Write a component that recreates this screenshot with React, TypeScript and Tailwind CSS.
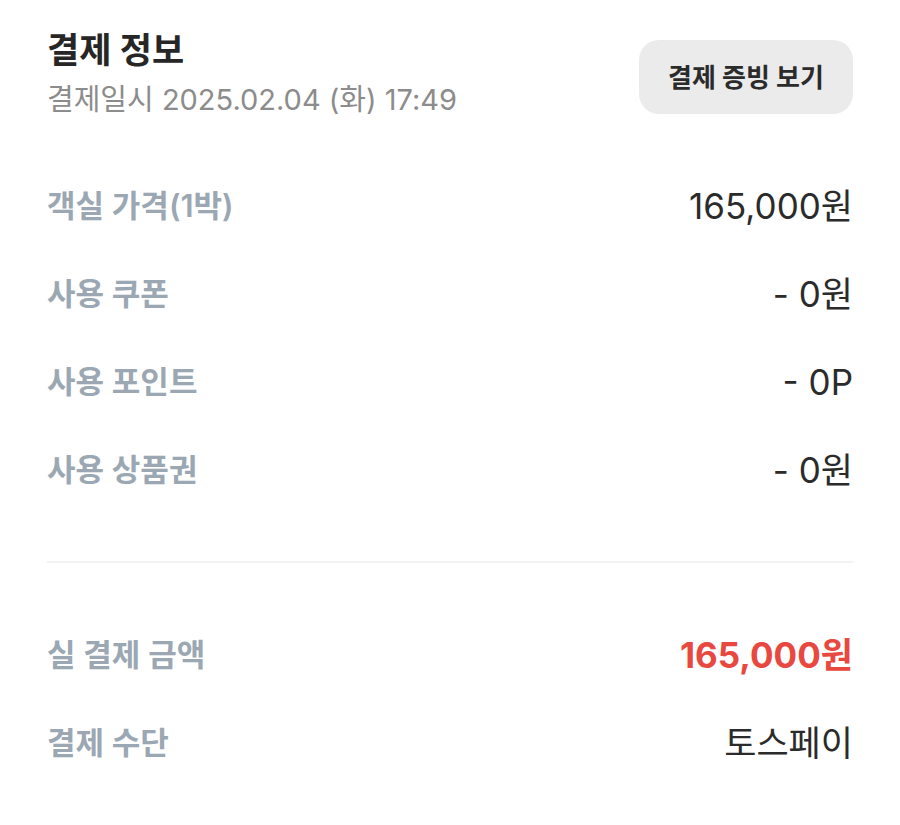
import React from 'react';

const rows = [
  { label: '객실 가격(1박)', value: '165,000원' },
  { label: '사용 쿠폰', value: '- 0원' },
  { label: '사용 포인트', value: '- 0P' },
  { label: '사용 상품권', value: '- 0원' },
];

function Row({ label, value, valueClass }: { label: string; value: string; valueClass?: string }) {
  return (
    <div className="flex h-[88px] items-center justify-between">
      <span className="text-[31px] font-semibold text-[#9ba7b3]">{label}</span>
      <span className={valueClass ?? 'text-[35px] text-[#2b2b2b]'}>{value}</span>
    </div>
  );
}

export default function App() {
  return (
    <div
      className="min-h-[825px] bg-white px-[47px] pt-[25px]"
      style={{ fontFamily: 'Inter, "Noto Sans CJK KR", "Noto Sans", sans-serif' }}
    >
      <div className="flex items-start justify-between">
        <div>
          <h1 className="text-[35px] font-bold leading-[50px] text-[#262626]">결제 정보</h1>
          <p className="mt-[6px] text-[29px] leading-[38px] text-[#8c8c8c]">결제일시 2025.02.04 (화) 17:49</p>
        </div>
        <button className="mt-[15px] h-[74px] w-[214px] rounded-[20px] bg-[#ebebeb] text-[26px] font-bold text-[#2b2b2b]">
          결제 증빙 보기
        </button>
      </div>

      <div className="mt-[43px]">
        {rows.map((r) => (
          <Row key={r.label} label={r.label} value={r.value} />
        ))}
      </div>

      <div className="mt-[47px] h-[2px] bg-[#f3f3f3]" />

      <div className="mt-[48px]">
        <Row label="실 결제 금액" value="165,000원" valueClass="text-[35px] font-bold text-[#e8483f]" />
        <Row label="결제 수단" value="토스페이" />
      </div>
    </div>
  );
}
